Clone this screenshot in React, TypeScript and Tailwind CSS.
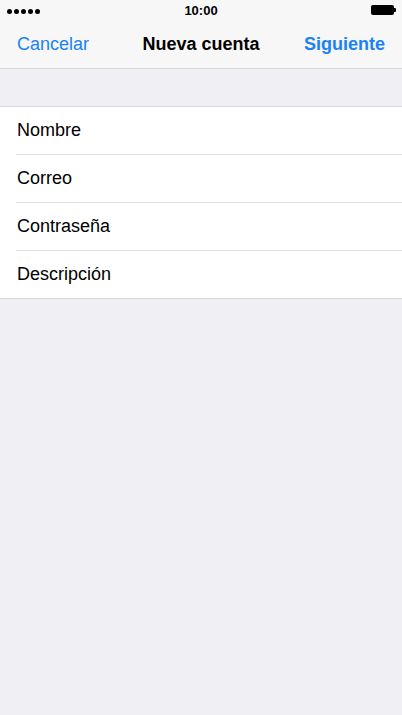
import React from "react";

export default function App() {
  const rows = ["Nombre", "Correo", "Contraseña", "Descripción"];
  return (
    <div className="w-[402px] h-[715px] bg-[#efeff4] flex flex-col" style={{ fontFamily: '"Liberation Sans", Arial, sans-serif' }}>
      <div className="bg-[#f7f7f7] border-b border-[#d5d5d8]">
        <div className="h-[21px] relative flex items-center justify-center">
          <div className="absolute left-[7px] top-[9px] flex gap-[2px]">
            {[0, 1, 2, 3, 4].map((i) => (
              <div key={i} className="w-[5px] h-[5px] rounded-full bg-black" />
            ))}
          </div>
          <span className="text-[13px] font-semibold text-black leading-none">10:00</span>
          <div className="absolute right-[6px] top-[5px] flex items-center">
            <div className="w-[23px] h-[10px] rounded-[2px] bg-black" />
            <div className="w-[2px] h-[4px] bg-black rounded-r-[1px]" />
          </div>
        </div>
        <div className="h-[47px] px-[17px] grid grid-cols-[1fr_auto_1fr] items-center text-[18px]">
          <span className="text-[#1b82f5] justify-self-start">Cancelar</span>
          <span className="font-semibold text-black">Nueva cuenta</span>
          <span className="font-semibold text-[#1b82f5] justify-self-end">Siguiente</span>
        </div>
      </div>
      <div className="h-[37px]" />
      <div className="bg-white border-y border-[#d8d8dc] pl-[16px]">
        {rows.map((r, i) => (
          <div key={r} className={i > 0 ? "border-t border-[#e0e0e3]" : ""}>
            <div className="h-[47px] pl-[1px] flex items-center text-[18px] text-black">{r}</div>
          </div>
        ))}
      </div>
    </div>
  );
}
